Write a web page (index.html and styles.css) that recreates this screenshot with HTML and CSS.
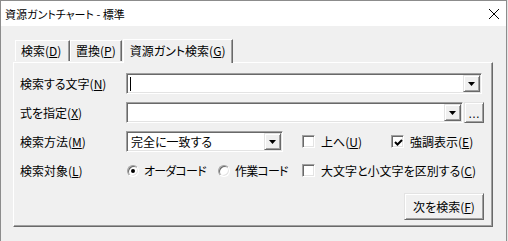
FILE: index.html
```html
<!DOCTYPE html>
<html lang="ja">
<head>
  <meta charset="UTF-8">
  <meta name="viewport" content="width=device-width, initial-scale=1.0">
  <title>資源ガントチャート - 標準</title>
  <link rel="stylesheet" href="styles.css">
</head>
<body>

  <div class="window">
    <div class="titlebar">
      <span class="title">資源ガントチャート - 標準</span>
      <svg class="close" width="10" height="10" viewBox="0 0 10 10">
        <path d="M0 0 L10 10 M10 0 L0 10" stroke="#000" stroke-width="1" fill="none"/>
      </svg>
    </div>

    <div class="client">
      <div class="tabs">
        <div class="tab first">検索(<u>D</u>)</div>
        <div class="tab">置換(<u>P</u>)</div>
        <div class="tab active">資源ガント検索(<u>G</u>)</div>
      </div>

      <div class="panel">
        <div class="form">
          <div class="label">検索する文字(<u>N</u>)</div>
          <div class="combo full">
            <span class="caret"></span>
            <span class="drop"><svg width="7" height="4" viewBox="0 0 7 4"><path d="M0 0 H7 L3.5 4 Z" fill="#000"/></svg></span>
          </div>

          <div class="label">式を指定(<u>X</u>)</div>
          <div class="line">
            <div class="combo expr">
              <span class="drop"><svg width="7" height="4" viewBox="0 0 7 4"><path d="M0 0 H7 L3.5 4 Z" fill="#000"/></svg></span>
            </div>
            <div class="btn dots">…</div>
          </div>

          <div class="label">検索方法(<u>M</u>)</div>
          <div class="line">
            <div class="combo method">
              <span class="value">完全に一致する</span>
              <span class="drop"><svg width="7" height="4" viewBox="0 0 7 4"><path d="M0 0 H7 L3.5 4 Z" fill="#000"/></svg></span>
            </div>
            <div class="opt up"><span class="check"></span><span>上へ(<u>U</u>)</span></div>
            <div class="opt"><span class="check">
              <svg width="9" height="9" viewBox="0 0 9 9"><path d="M1 4 L3.5 6.5 L8 2" stroke="#000" stroke-width="2" fill="none"/></svg>
            </span><span>強調表示(<u>E</u>)</span></div>
          </div>

          <div class="label">検索対象(<u>L</u>)</div>
          <div class="line targets">
            <div class="opt order"><span class="radio on"></span><span class="kana">オーダコード</span></div>
            <div class="opt work"><span class="radio"></span><span class="kana">作業コード</span></div>
            <div class="opt"><span class="check"></span><span>大文字と小文字を区別する(<u>C</u>)</span></div>
          </div>
        </div>

        <div class="footer">
          <div class="btn next">次を検索(<u>F</u>)</div>
        </div>
      </div>
    </div>
  </div>

</body>
</html>
```

FILE: styles.css
```css
body {
  margin: 0;
  background-color: #e6e6e6;
  font-family: "Noto Sans CJK JP", "Noto Sans", sans-serif;
  font-size: 12px;
  font-feature-settings: "palt";
  color: #000;
}

u { text-underline-offset: 1px; }

.window {
  width: 507px;
  height: 241px;
  box-sizing: border-box;
  border: 1px solid #8c8c8c;
  border-bottom: none;
  background-color: #f0f0f0;
}

/* title bar */
.titlebar {
  height: 25px;
  background-color: #fff;
  display: flex;
  justify-content: space-between;
  align-items: center;
  padding: 0 7px 0 4px;
}

.title {
  font-size: 11px;
  line-height: 24px;
}

.close { margin-top: 1px; }

/* client area */
.client {
  padding: 13px 0 0 12px;
}

.tabs {
  display: flex;
  align-items: flex-end;
  height: 23px;
  padding-left: 2px;
  position: relative;
  z-index: 1;
}

.tab {
  height: 21px;
  box-sizing: border-box;
  border-top: 1px solid #fff;
  border-left: 1px solid #fff;
  border-right: 1px solid #696969;
  box-shadow: inset -1px 0 #a0a0a0;
  line-height: 20px;
  padding: 0 5px;
  margin-bottom: 1px;
  white-space: nowrap;
}

.tab.first { width: 55px; padding-left: 5px; }

.tab.active {
  height: 24px;
  width: 110px;
  margin-left: 1px;
  margin-bottom: -1px;
  padding: 1px 6px 0;
  background-color: #f0f0f0;
}

.panel {
  width: 480px;
  height: 165px;
  box-sizing: border-box;
  border-top: 1px solid #fff;
  border-left: 1px solid #fff;
  border-right: 1px solid #696969;
  border-bottom: 1px solid #696969;
  box-shadow: inset -1px -1px #a0a0a0;
  padding: 10px 10px 0 6px;
}

.form {
  display: grid;
  grid-template-columns: 106px 1fr;
  grid-auto-rows: 21px;
  row-gap: 8px;
  align-items: center;
}

.label { line-height: 16px; white-space: nowrap; }

.line {
  display: flex;
  align-items: center;
  height: 21px;
}

/* sunken combo box */
.combo {
  height: 21px;
  box-sizing: border-box;
  background-color: #fff;
  border: 1px solid;
  border-color: #a0a0a0 #fff #fff #a0a0a0;
  box-shadow: inset 1px 1px #696969, inset -1px -1px #e3e3e3;
  padding: 1px;
  display: flex;
  align-items: center;
  justify-content: space-between;
}

.combo.full { width: 356px; }
.combo.expr { width: 337px; justify-content: flex-end; }
.combo.method { width: 157px; }

.caret {
  width: 1px;
  height: 14px;
  background-color: #000;
  margin-left: 2px;
}

.value {
  padding-left: 3px;
  line-height: 16px;
}

.drop {
  width: 17px;
  height: 17px;
  box-sizing: border-box;
  background-color: #f0f0f0;
  border: 1px solid;
  border-color: #e3e3e3 #696969 #696969 #e3e3e3;
  box-shadow: inset 1px 1px #fff, inset -1px -1px #a0a0a0;
  display: flex;
  align-items: center;
  justify-content: center;
}

/* raised push buttons */
.btn {
  box-sizing: border-box;
  background-color: #f0f0f0;
  border: 1px solid;
  border-color: #e3e3e3 #696969 #696969 #e3e3e3;
  box-shadow: inset 1px 1px #fff, inset -1px -1px #a0a0a0;
  display: flex;
  align-items: center;
  justify-content: center;
}

.btn.dots {
  width: 20px;
  height: 21px;
  margin-left: 1px;
  font-family: "Liberation Sans", sans-serif;
  font-size: 12px;
  line-height: 14px;
  padding-top: 3px;
}

.btn.next {
  width: 80px;
  height: 27px;
  line-height: 16px;
}

.footer {
  display: flex;
  justify-content: flex-end;
  margin: 12px -2px 0 0;
}

/* check boxes and radio buttons */
.opt {
  display: flex;
  align-items: center;
  gap: 6px;
  line-height: 16px;
  white-space: nowrap;
}

.opt.up { width: 89px; margin-left: 19px; }

.targets { padding-left: 1px; }
.opt.order { width: 91px; gap: 5px; }
.opt.work { width: 84px; gap: 5px; }
.kana { letter-spacing: -0.8px; }

.check {
  width: 13px;
  height: 13px;
  box-sizing: border-box;
  background-color: #fff;
  border: 1px solid;
  border-color: #a0a0a0 #fff #fff #a0a0a0;
  box-shadow: inset 1px 1px #696969, inset -1px -1px #e3e3e3;
  display: flex;
  align-items: center;
  justify-content: center;
}

.check svg { margin: 1px 0 0 1px; }

.radio {
  width: 12px;
  height: 12px;
  box-sizing: border-box;
  border-radius: 50%;
  background-color: #fff;
  border: 1px solid;
  border-color: #a0a0a0 #fff #fff #a0a0a0;
  box-shadow: inset 1px 1px #696969, inset -1px -1px #e3e3e3;
  display: flex;
  align-items: center;
  justify-content: center;
}

.radio.on::after {
  content: "";
  width: 4px;
  height: 4px;
  border-radius: 50%;
  background-color: #000;
}
```
